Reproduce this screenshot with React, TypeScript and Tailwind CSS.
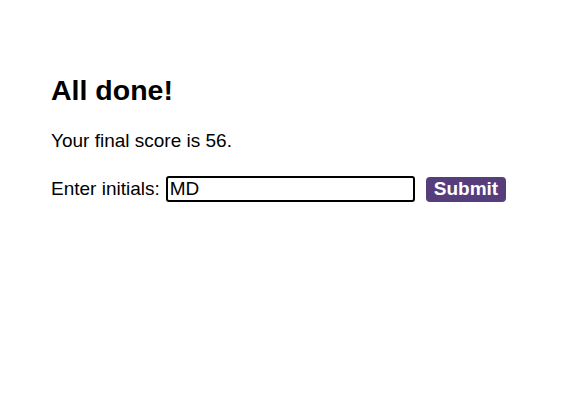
export default function App() {
  return (
    <div className="min-h-screen bg-white text-black font-['Liberation_Sans',Arial,sans-serif]">
      <div className="pl-[51px] pt-[73px]">
        <h2 className="text-[28.5px] font-bold leading-[34px]">All done!</h2>
        <p className="mt-[23px] text-[19px] leading-[22px]">Your final score is 56.</p>
        <form className="mt-[24px] flex items-center" onSubmit={(e) => e.preventDefault()}>
          <label htmlFor="initials" className="text-[19px] leading-[22px]">
            Enter initials:
          </label>
          <input
            id="initials"
            defaultValue="MD"
            className="ml-[6px] w-[249px] h-[26px] border-2 border-black rounded-[3px] px-[2px] text-[19px] leading-[22px] outline-none"
          />
          <button
            type="submit"
            className="ml-[11px] h-[25px] px-[8px] rounded-[4px] bg-[#563d7c] text-white text-[19px] font-bold leading-[22px]"
          >
            Submit
          </button>
        </form>
      </div>
    </div>
  );
}
